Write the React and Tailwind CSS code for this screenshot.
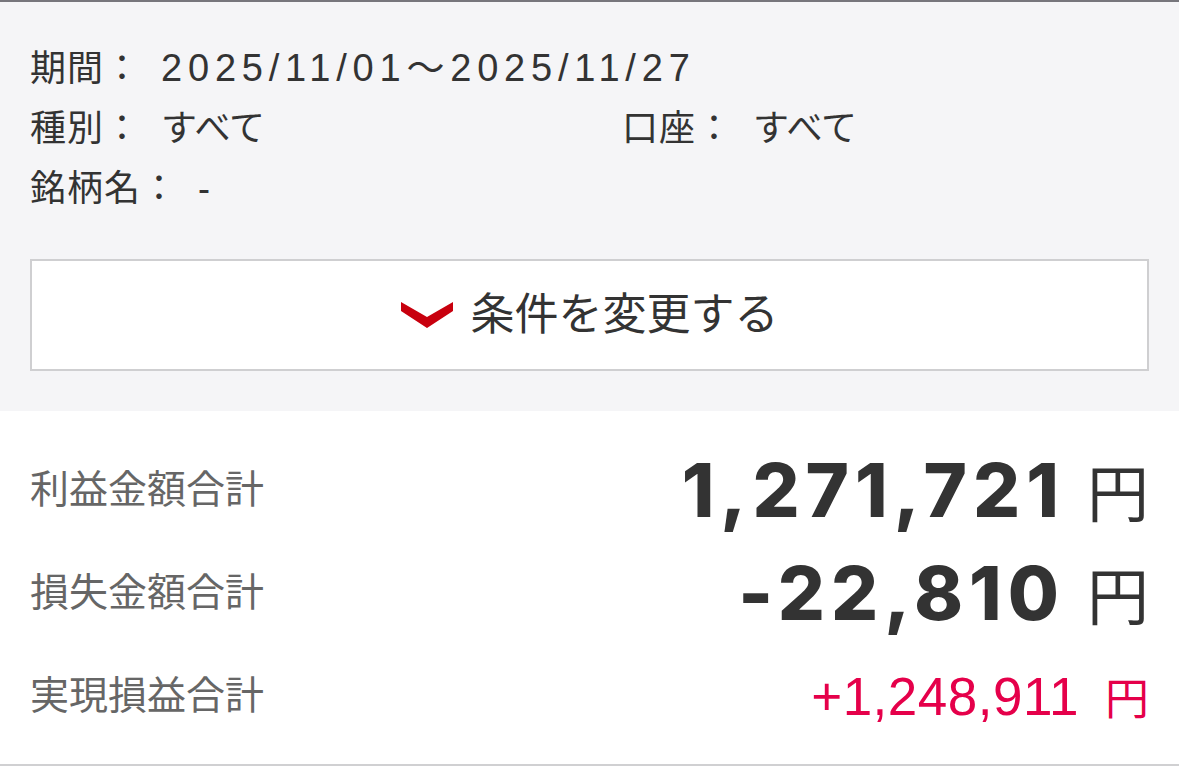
const font = { fontFamily: '"Liberation Sans", "Noto Sans CJK JP", sans-serif' }
const inter = { fontFamily: 'Inter, "Liberation Sans", sans-serif' }

function Field({ label, value, className = '' }) {
  return (
    <div className={'flex items-center ' + className}>
      <span className="tracking-[1px]">{label}：</span>
      <span className="ml-[20px]">{value}</span>
    </div>
  )
}

function Total({ label, value, big, red }) {
  return (
    <div className="flex h-[103px] items-center justify-between">
      <span className="text-[39px] text-[#666]">{label}</span>
      {big ? (
        <span className="flex items-baseline text-[#333]">
          <span style={inter} className="text-[74px] font-extrabold tracking-[6px]">{value}</span>
          <span className="ml-[22px] text-[62px]">円</span>
        </span>
      ) : (
        <span className={'flex items-baseline ' + (red ? 'text-[#e5004a]' : 'text-[#333]')}>
          <span className="text-[53px] tracking-[0.5px]">{value}</span>
          <span className="ml-[26px] text-[44px]">円</span>
        </span>
      )}
    </div>
  )
}

export default function App() {
  return (
    <div style={font} className="w-[1179px] h-[780px] overflow-hidden bg-white">
      <div className="border-t-[2px] border-[#77767c] bg-[#f5f5f7] px-[30px] pt-[36px] pb-[40px]">
        <div className="text-[36px] leading-[60px] text-[#333]">
          <Field
            label="期間"
            value={<span className="text-[38px] tracking-[5.8px]">2025/11/01～2025/11/27</span>}
          />
          <div className="grid grid-cols-[592px_1fr]">
            <Field label="種別" value="すべて" />
            <Field label="口座" value="すべて" />
          </div>
          <Field label="銘柄名" value="-" />
        </div>
        <button className="mt-[40px] flex h-[112px] w-full items-center justify-center border-[2px] border-[#cfcfd1] bg-white text-[44px] text-[#333]">
          <svg width="52" height="26" viewBox="0 0 52 26" className="mr-[18px]">
            <path d="M0 0 L26 15 L52 0 L52 9 L26 26 L0 9 Z" fill="#c8000e" />
          </svg>
          条件を変更する
        </button>
      </div>
      <div className="border-b-[2px] border-[#d0d0d2] px-[30px] pt-[28px] pb-[16px]">
        <Total label="利益金額合計" value="1,271,721" big />
        <Total label="損失金額合計" value="-22,810" big />
        <Total label="実現損益合計" value="+1,248,911" red />
      </div>
    </div>
  )
}
